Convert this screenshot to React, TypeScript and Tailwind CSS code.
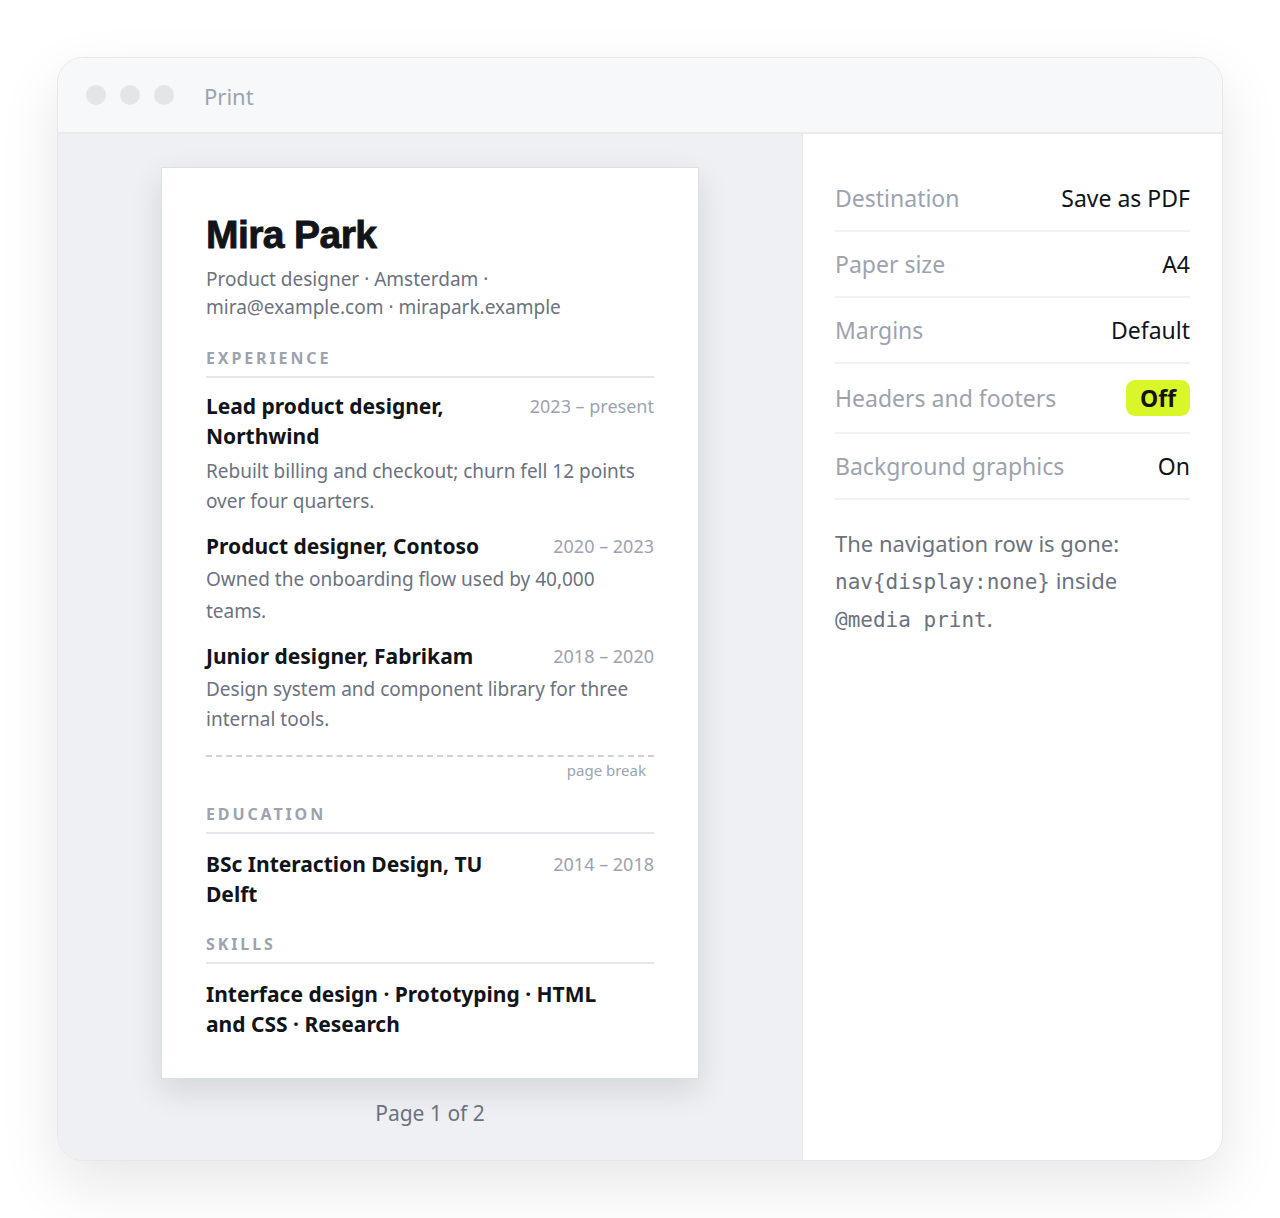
import React from "react";

const sans = { fontFamily: '"Noto Sans", "DejaVu Sans", sans-serif' };
const mono = { fontFamily: '"DejaVu Sans Mono", monospace' };

function Job({ title, date, desc, mt, descMt, descLh = "leading-[30px]" }: { title: React.ReactNode; date: string; desc: React.ReactNode; mt: string; descMt?: string; descLh?: string }) {
  return (
    <div className={mt}>
      <div className="flex justify-between items-start gap-6">
        <div className="text-[21px] leading-[30px] font-bold text-[#111418]">{title}</div>
        <div className="text-[18px] leading-[30px] text-[#9ca3af] whitespace-nowrap shrink-0">{date}</div>
      </div>
      {desc && <div className={`text-[19px] ${descLh} text-[#6b7280] ${descMt}`}>{desc}</div>}
    </div>
  );
}

function Section({ label }: { label: string }) {
  return (
    <div className="pb-[8px] border-b-2 border-[#e5e7eb] text-[16px] leading-[20px] font-bold tracking-[0.18em] text-[#9ca3af]">
      {label}
    </div>
  );
}

function Row({ label, value }: { label: string; value: React.ReactNode }) {
  return (
    <div className="flex items-center justify-between h-[66px] border-b-2 border-[#f0f1f3]">
      <span className="text-[23px] text-[#9ca3af]">{label}</span>
      <span className="text-[23px] text-[#111418]">{value}</span>
    </div>
  );
}

export default function App() {
  return (
    <div className="w-[1280px] h-[1218px] bg-white pt-[57px] pl-[57px]" style={sans}>
      <div className="w-[1166px] h-[1104px] rounded-[26px] border border-[#e5e7eb] bg-white overflow-hidden flex flex-col shadow-[0_24px_60px_rgba(15,23,42,0.10)]">
        <div className="h-[76px] shrink-0 bg-[#f7f8fa] border-b-2 border-[#e8eaed] flex items-center pl-[28px]">
          <div className="flex gap-[14px]">
            <span className="w-[20px] h-[20px] rounded-full bg-[#e3e5e8]" />
            <span className="w-[20px] h-[20px] rounded-full bg-[#e3e5e8]" />
            <span className="w-[20px] h-[20px] rounded-full bg-[#e3e5e8]" />
          </div>
          <span className="ml-[30px] text-[22px] text-[#9ca3af] mt-[2px]">Print</span>
        </div>
        <div className="flex flex-1 min-h-0">
          <div className="w-[745px] shrink-0 bg-[#eef0f3] flex flex-col items-center pt-[33px] border-r border-[#e5e7eb]">
            <div className="w-[538px] h-[912px] bg-white border border-[#dcdfe3] shadow-[0_12px_30px_rgba(15,23,42,0.12)] px-[44px] pt-[43px]">
              <div
                className="text-[39px] leading-[48px] font-bold tracking-[-0.015em] text-[#111418] [-webkit-text-stroke:0.9px_#111418]"
                style={{ fontFamily: '"Liberation Sans", Arial, sans-serif' }}
              >
                Mira Park
              </div>
              <div className="mt-[6px] text-[19px] leading-[28px] text-[#6b7280]">
                Product designer · Amsterdam ·<br />mira@example.com · mirapark.example
              </div>
              <div className="mt-[27px]"><Section label="EXPERIENCE" /></div>
              <Job mt="mt-[13px]" descMt="mt-[5px]" title={<>Lead product designer,<br />Northwind</>} date="2023 – present" desc={<>Rebuilt billing and checkout; churn fell 12 points over four quarters.</>} />
              <Job mt="mt-[15px]" descMt="mt-[2px]" title="Product designer, Contoso" date="2020 – 2023" desc="Owned the onboarding flow used by 40,000 teams." descLh="leading-[32px]" />
              <Job mt="mt-[14px]" descMt="mt-[3px]" title="Junior designer, Fabrikam" date="2018 – 2020" desc="Design system and component library for three internal tools." />
              <div className="mt-[21px] border-t-2 border-dashed border-[#cfd3d8]" />
              <div className="text-right pr-[8px] text-[15px] leading-[22px] text-[#9ca3af] mt-[2px]">page break</div>
              <div className="mt-[23px]"><Section label="EDUCATION" /></div>
              <Job mt="mt-[15px]" title={<>BSc Interaction Design, TU<br />Delft</>} date="2014 – 2018" desc={null} />
              <div className="mt-[25px]"><Section label="SKILLS" /></div>
              <div className="mt-[15px] text-[21px] leading-[30px] font-bold text-[#111418] pr-[40px]">
                Interface design · Prototyping · HTML and CSS · Research
              </div>
            </div>
            <div className="mt-[19px] text-[21px] text-[#6b7280]">Page 1 of 2</div>
          </div>
          <div className="flex-1 bg-white px-[32px] pt-[32px]">
            <Row label="Destination" value="Save as PDF" />
            <Row label="Paper size" value="A4" />
            <Row label="Margins" value="Default" />
            <div className="flex items-center justify-between h-[70px] border-b-2 border-[#f0f1f3]">
              <span className="text-[23px] text-[#9ca3af]">Headers and footers</span>
              <span className="h-[36px] px-[14px] rounded-[9px] bg-[#d9f629] text-[23px] font-bold text-[#111418] flex items-center">Off</span>
            </div>
            <Row label="Background graphics" value="On" />
            <div className="mt-[25px] text-[22px] leading-[36.5px] text-[#6b7280]">
              The navigation row is gone:<br />
              <code style={mono} className="text-[21px]">nav{"{display:none}"}</code> inside<br />
              <code style={mono} className="text-[21px]">@media print</code>.
            </div>
          </div>
        </div>
      </div>
    </div>
  );
}
